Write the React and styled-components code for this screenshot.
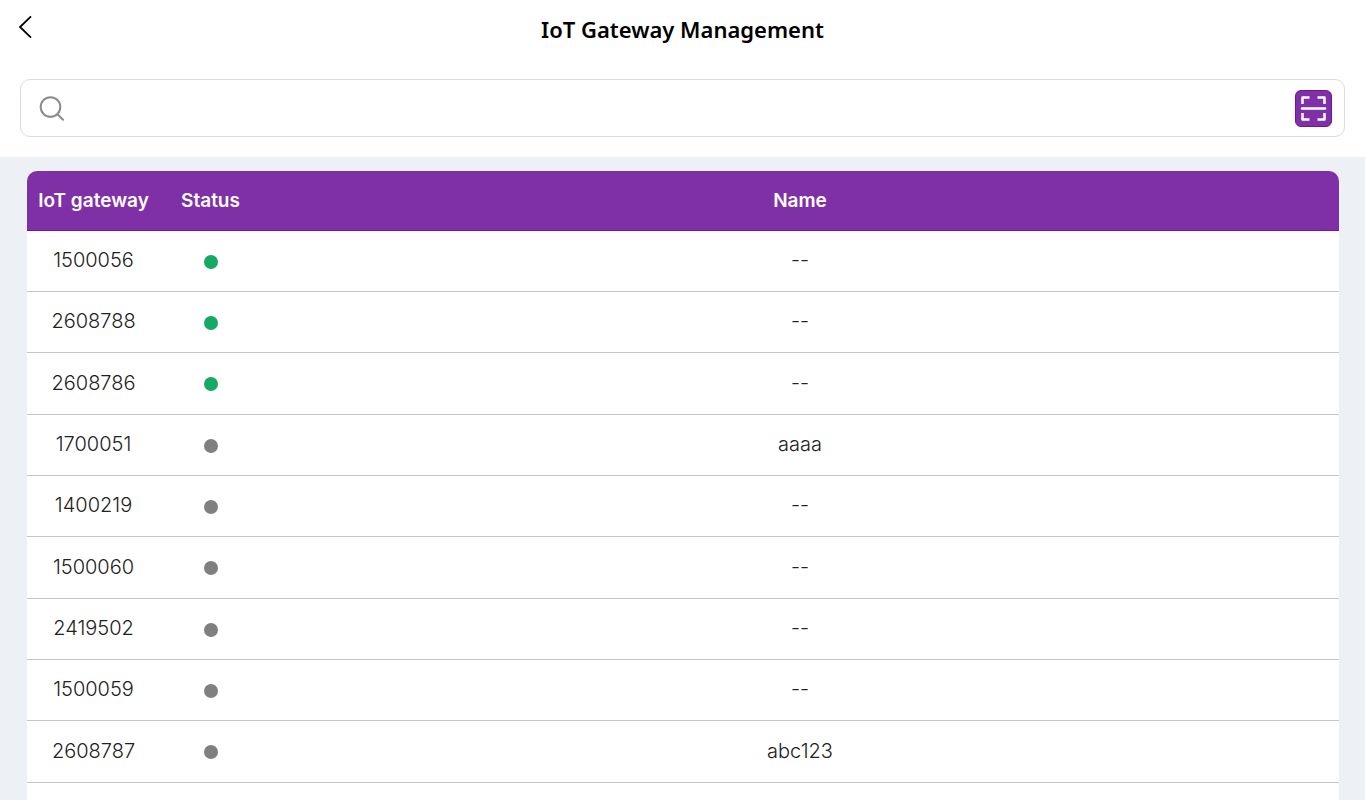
import React, { useState } from 'react'
import styled, { createGlobalStyle } from 'styled-components'

const gateways = [
  { id: '1500056', online: true, name: '--' },
  { id: '2608788', online: true, name: '--' },
  { id: '2608786', online: true, name: '--' },
  { id: '1700051', online: false, name: 'aaaa' },
  { id: '1400219', online: false, name: '--' },
  { id: '1500060', online: false, name: '--' },
  { id: '2419502', online: false, name: '--' },
  { id: '1500059', online: false, name: '--' },
  { id: '2608787', online: false, name: 'abc123' },
]

const App = () => {
  const [query, setQuery] = useState('')

  const rows = gateways.filter(
    (g) => g.id.includes(query) || g.name.includes(query)
  )

  return (
    <Page>
      <GlobalStyle />
      <Header>
        <BackButton type='button' aria-label='Back'>
          <svg width='16' height='24' viewBox='0 0 16 24' fill='none'>
            <path d='M14 1.3L3 12L14 22.7' stroke='#000' strokeWidth='1.8' />
          </svg>
        </BackButton>
        <Title>IoT Gateway Management</Title>
      </Header>
      <SearchArea>
        <SearchBox>
          <svg width='26' height='26' viewBox='0 0 26 26' fill='none'>
            <circle cx='11.5' cy='12' r='9.8' stroke='#8b8c90' strokeWidth='2' />
            <path
              d='M18.5 19.2L24 24.7'
              stroke='#8b8c90'
              strokeWidth='2'
              strokeLinecap='round'
            />
          </svg>
          <SearchInput
            type='text'
            aria-label='Search'
            value={query}
            onChange={(e) => setQuery(e.target.value)}
          />
          <ScanButton type='button' aria-label='Scan code'>
            <svg width='27' height='27' viewBox='0 0 27 27' fill='none'>
              <path
                d='M2.5 9V2.5H9.5M17.5 2.5H24.5V9M24.5 18V24.5H17.5M9.5 24.5H2.5V18'
                stroke='#fff'
                strokeWidth='2.5'
                strokeLinejoin='round'
              />
              <path
                d='M2 13.5H25'
                stroke='#fff'
                strokeWidth='2.5'
                strokeLinecap='round'
              />
            </svg>
          </ScanButton>
        </SearchBox>
      </SearchArea>
      <Content>
        <Card>
          <Table>
            <thead>
              <tr>
                <HeadCell scope='col' $width='133px'>
                  IoT gateway
                </HeadCell>
                <HeadCell scope='col' $width='101px'>
                  Status
                </HeadCell>
                <HeadCell scope='col'>Name</HeadCell>
              </tr>
            </thead>
            <tbody>
              {rows.map((g) => (
                <Row key={g.id}>
                  <Cell>{g.id}</Cell>
                  <Cell>
                    <Dot
                      role='img'
                      aria-label={g.online ? 'Online' : 'Offline'}
                      $online={g.online}
                    />
                  </Cell>
                  <Cell>{g.name}</Cell>
                </Row>
              ))}
            </tbody>
          </Table>
        </Card>
      </Content>
    </Page>
  )
}

export default App

const GlobalStyle = createGlobalStyle`
  * {
    box-sizing: border-box;
  }

  body {
    margin: 0;
    background: #edf1f6;
    font-family: Inter, 'Liberation Sans', sans-serif;
  }
`

const Page = styled.div`
  display: flex;
  flex-direction: column;
  min-height: 100vh;
`

const Header = styled.header`
  display: grid;
  grid-template-columns: 48px 1fr 48px;
  align-items: center;
  height: 59px;
  padding-bottom: 2px;
  background: #fff;
`

const BackButton = styled.button`
  display: flex;
  padding: 0 0 4px 17px;
  border: 0;
  background: none;
  cursor: pointer;
`

const Title = styled.h1`
  margin: 0;
  color: #000;
  font-family: 'Noto Sans', 'Open Sans', sans-serif;
  font-size: 22px;
  font-weight: 600;
  line-height: 30px;
  text-align: center;
`

const SearchArea = styled.div`
  padding: 20px;
  background: #fff;
`

const SearchBox = styled.div`
  display: flex;
  align-items: center;
  gap: 12px;
  height: 58px;
  padding: 0 12px 0 18px;
  border: 1px solid #dcdcdc;
  border-radius: 10px;
`

const SearchInput = styled.input`
  flex: 1;
  min-width: 0;
  height: 40px;
  padding: 0;
  border: 0;
  outline: 0;
  background: none;
  font-family: inherit;
  font-size: 20px;
`

const ScanButton = styled.button`
  display: flex;
  align-items: center;
  justify-content: center;
  width: 37px;
  height: 37px;
  padding: 0;
  border: 1px solid #7112a0;
  border-radius: 6px;
  background: #8030a7;
  cursor: pointer;
`

const Content = styled.main`
  display: flex;
  flex: 1;
  padding: 14px 26px 0 27px;
`

const Card = styled.section`
  flex: 1;
  border-radius: 10px 10px 0 0;
  background: #fff;
  overflow: hidden;
`

const Table = styled.table`
  width: 100%;
  table-layout: fixed;
  border-collapse: separate;
  border-spacing: 0;
  text-align: center;
`

const HeadCell = styled.th`
  width: ${(props) => props.$width || 'auto'};
  height: 60px;
  padding: 0;
  border-bottom: 1px solid #7112a0;
  background: #8030a7;
  color: #fff;
  font-size: 19px;
  font-weight: 600;
  white-space: nowrap;
`

const Cell = styled.td`
  height: 61px;
  padding: 0 0 2px;
  border-bottom: 1px solid #c6c6c6;
  color: #222;
  font-size: 20px;
  font-weight: 300;
`

const Row = styled.tr`
  &:nth-child(3n) ${Cell} {
    height: 62px;
  }
`

const Dot = styled.span`
  display: inline-block;
  width: 14px;
  height: 14px;
  border-radius: 50%;
  background: ${(props) => (props.$online ? '#15a964' : '#808080')};
  vertical-align: middle;
`
